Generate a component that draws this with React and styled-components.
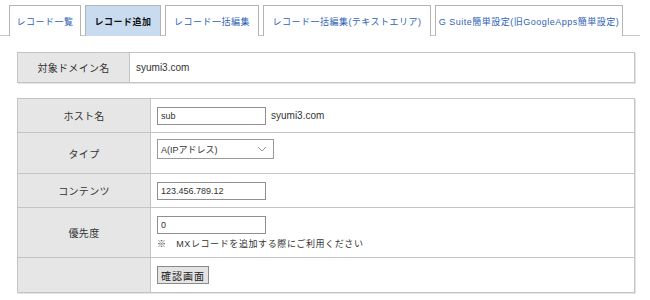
import React from 'react';
import styled, { createGlobalStyle } from 'styled-components';

const GlobalStyle = createGlobalStyle`
  body {
    margin: 0;
    background: #fff;
    font-family: "Liberation Sans", "Noto Sans CJK JP", sans-serif;
    font-size: 10px;
    color: #333;
  }
`;

const Page = styled.div`
  width: 650px;
  height: 300px;
  overflow: hidden;
`;

const TabBar = styled.div`
  display: flex;
  gap: 4px;
  width: 631px;
  padding: 5px 0 0 9px;
  border-bottom: 1px solid #c8c8c8;
  height: 30px;
`;

const Tab = styled.div`
  flex-shrink: 0;
  display: flex;
  align-items: center;
  justify-content: center;
  width: ${({ w }) => w}px;
  height: 31px;
  box-sizing: border-box;
  border: 1px solid #b4b4b4;
  border-bottom: none;
  background: ${({ active }) => (active ? '#c8dbef' : '#fff')};
  color: ${({ active }) => (active ? '#111' : '#2f5fb8')};
  font-weight: ${({ active }) => (active ? 700 : 400)};
  font-size: 9px;
  letter-spacing: 0.5px;
  white-space: nowrap;
`;

const Content = styled.div`
  padding: 16px 0 0 17px;
  display: flex;
  flex-direction: column;
  gap: 15px;
`;

const Table = styled.table`
  width: 618px;
  border-collapse: collapse;
  border: 1px solid #c4c4c4;
  box-shadow: 1px 1px 0 #e4e4e4;
`;

const Label = styled.th`
  width: ${({ w }) => w}px;
  background: #e6e6e6;
  font-weight: 400;
  color: #333;
  text-align: center;
  border: 1px solid #c4c4c4;
  height: ${({ h }) => h}px;
  padding: 0;
  box-sizing: border-box;
  letter-spacing: 0.3px;
`;

const Cell = styled.td`
  border: 1px solid #c4c4c4;
  padding: ${({ top }) => (top ? '6px 6px 0' : '0 6px')};
  vertical-align: ${({ top }) => (top ? 'top' : 'middle')};
  height: ${({ h }) => h}px;
  box-sizing: border-box;
  color: #333;
`;

const Field = styled.div`
  display: flex;
  align-items: center;
  gap: 5px;
`;

const TextInput = styled.input`
  display: block;
  width: 109px;
  height: 18px;
  box-sizing: border-box;
  border: 1px solid #8f8f8f;
  padding: 0 3px;
  font-family: "Liberation Sans", "Noto Sans CJK JP", sans-serif;
  font-size: 9px;
  color: #333;
  outline: none;
`;

const Select = styled.div`
  width: 117px;
  height: 20px;
  box-sizing: border-box;
  border: 1px solid #9a9a9a;
  display: flex;
  align-items: center;
  justify-content: space-between;
  padding: 0 6px 0 3px;
  font-size: 9px;
  color: #333;
`;

const Note = styled.div`
  margin-top: 3px;
  font-size: 9px;
  letter-spacing: 0.6px;
`;

const Button = styled.button`
  display: block;
  height: 18px;
  padding: 0 3px;
  border: 1px solid #8a8a8a;
  background: #e4e4e4;
  font-family: "Liberation Sans", "Noto Sans CJK JP", sans-serif;
  font-size: 10px;
  color: #222;
  letter-spacing: 1px;
`;

const Chevron = () => (
  <svg width="10" height="6" viewBox="0 0 10 6">
    <path d="M1 1 L5 5 L9 1" stroke="#999" strokeWidth="1" fill="none" />
  </svg>
);

const tabs = [
  { label: 'レコード一覧', w: 72 },
  { label: 'レコード追加', w: 76, active: true },
  { label: 'レコード一括編集', w: 94 },
  { label: 'レコード一括編集(テキストエリア)', w: 168 },
  { label: 'G Suite簡単設定(旧GoogleApps簡単設定)', w: 188 },
];

const App = () => (
  <Page>
    <GlobalStyle />
    <TabBar>
      {tabs.map((t) => (
        <Tab key={t.label} w={t.w} active={t.active}>
          {t.label}
        </Tab>
      ))}
    </TabBar>
    <Content>
      <Table>
        <tbody>
          <tr>
            <Label w={112} h={30}>対象ドメイン名</Label>
            <Cell h={30}>syumi3.com</Cell>
          </tr>
        </tbody>
      </Table>
      <Table>
        <tbody>
          <tr>
            <Label w={133} h={34}>ホスト名</Label>
            <Cell h={34}>
              <Field>
                <TextInput defaultValue="sub" />
                <span>syumi3.com</span>
              </Field>
            </Cell>
          </tr>
          <tr>
            <Label w={133} h={41}>タイプ</Label>
            <Cell h={41} top>
              <Select>
                <span>A(IPアドレス)</span>
                <Chevron />
              </Select>
            </Cell>
          </tr>
          <tr>
            <Label w={133} h={34}>コンテンツ</Label>
            <Cell h={34}>
              <TextInput defaultValue="123.456.789.12" />
            </Cell>
          </tr>
          <tr>
            <Label w={133} h={50}>優先度</Label>
            <Cell h={50}>
              <TextInput defaultValue="0" />
              <Note>※　MXレコードを追加する際にご利用ください</Note>
            </Cell>
          </tr>
          <tr>
            <Label w={133} h={35}></Label>
            <Cell h={35}>
              <Button>確認画面</Button>
            </Cell>
          </tr>
        </tbody>
      </Table>
    </Content>
  </Page>
);

export default App;
